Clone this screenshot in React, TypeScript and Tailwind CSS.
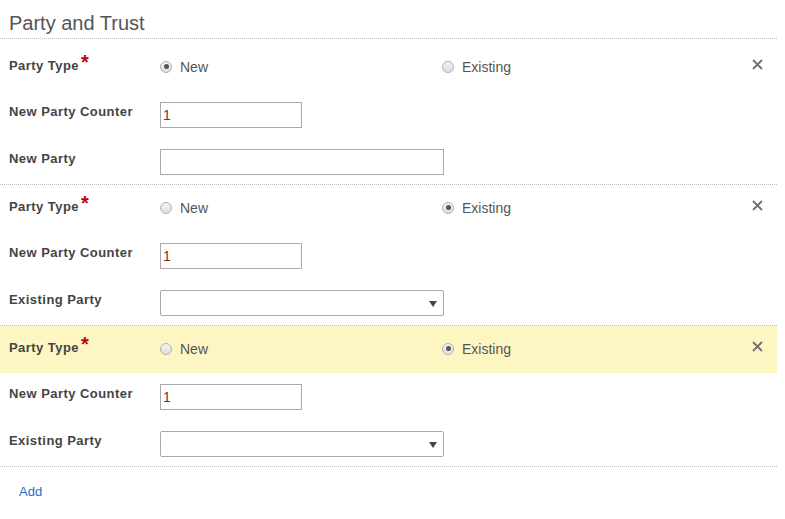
import React from "react";

function Radio({ checked, label }: { checked: boolean; label: string }) {
  return (
    <div className="flex items-center h-full pb-[2px]">
      <span className="relative w-[12px] h-[12px] rounded-full border border-[#b0b0b0] bg-gradient-to-b from-[#f4f4f4] to-[#dedede] flex items-center justify-center">
        {checked && <span className="w-[5px] h-[5px] rounded-full bg-[#555]" />}
      </span>
      <span className="ml-[8px] text-[14px] text-[#555] leading-[18px]">{label}</span>
    </div>
  );
}

function CloseIcon() {
  return (
    <svg width="11" height="11" viewBox="0 0 11 11" className="block">
      <path d="M1 1 L10 10 M10 1 L1 10" stroke="#707070" strokeWidth="1.8" strokeLinecap="butt" />
    </svg>
  );
}

function Label({ text, required }: { text: string; required?: boolean }) {
  return (
    <div className="w-[160px] shrink-0 pl-[9px] text-[13px] font-bold text-[#444] leading-[18px] tracking-[0.45px]">
      {text}
      {required && (
        <span className="relative top-[-1px] ml-[2px] text-[20px] font-bold text-[#c00000] leading-[0]">*</span>
      )}
    </div>
  );
}

function Section({
  mode,
  highlight,
}: {
  mode: "new" | "existing";
  highlight?: boolean;
}) {
  return (
    <div className="border-b border-dotted border-[#bdbdbd]">
      <div className={`flex h-[47px] ${highlight ? "bg-[#fdf6c3]" : ""}`}>
        <div className="pt-[13px]">
          <Label text="Party Type" required />
        </div>
        <div className="w-[282px] shrink-0">
          <Radio checked={mode === "new"} label="New" />
        </div>
        <div className="w-[310px] shrink-0">
          <Radio checked={mode === "existing"} label="Existing" />
        </div>
        <div className="flex-1 flex items-center pb-[7px]">
          <CloseIcon />
        </div>
      </div>
      <div className="flex items-start h-[47px] pt-[11px]">
        <div className="mt-[1px]">
          <Label text="New Party Counter" />
        </div>
        <div className="w-[142px] h-[26px] border border-[#a9a9a9] bg-white pl-[2px] text-[14px] leading-[24px] text-[#8b2a1f]">
          1
        </div>
      </div>
      <div className="flex items-start h-[46px] pt-[11px]">
        <div className="mt-[1px]">
          <Label text={mode === "new" ? "New Party" : "Existing Party"} />
        </div>
        {mode === "new" ? (
          <div className="w-[284px] h-[26px] border border-[#a9a9a9] bg-white" />
        ) : (
          <div className="w-[284px] h-[26px] border border-[#a9a9a9] bg-white flex items-center justify-end pr-[6px] rounded-[2px]">
            <svg width="8" height="8" viewBox="0 0 8 8" className="block mt-[2px]">
              <path d="M0 1 L8 1 L4 7 Z" fill="#444" />
            </svg>
          </div>
        )}
      </div>
    </div>
  );
}

export default function App() {
  return (
    <div
      className="w-[785px] h-[519px] bg-white"
      style={{ fontFamily: '"Liberation Sans", Arial, sans-serif' }}
    >
      <div className="w-[777px]">
        <div className="h-[39px] border-b border-dotted border-[#bdbdbd] pl-[9px] pt-[11px] text-[20px] leading-[24px] text-[#555]">
          Party and Trust
        </div>
        <div className="mt-[5px]">
          <Section mode="new" />
          <Section mode="existing" />
          <Section mode="existing" highlight />
        </div>
        <div className="pl-[19px] pt-[12px]">
          <a className="text-[13px] leading-[18px] text-[#1a6fc9] cursor-pointer">Add</a>
        </div>
      </div>
    </div>
  );
}
